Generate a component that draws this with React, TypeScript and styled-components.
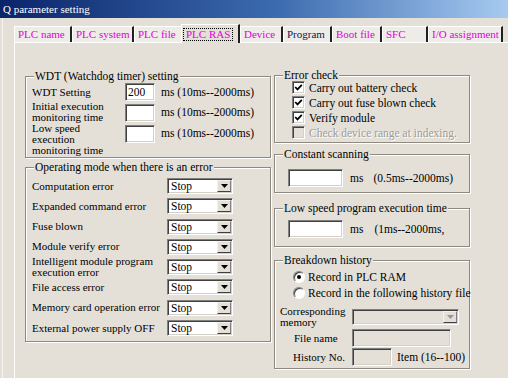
import React from "react";
import styled, { createGlobalStyle } from "styled-components";

const GlobalStyle = createGlobalStyle`
  html, body {
    margin: 0;
    padding: 0;
  }
  body {
    background: #e4e0d8;
    font-family: "Liberation Serif", "Times New Roman", serif;
    font-size: 11.5px;
    color: #000;
  }
`;

const Window = styled.div`
  width: 508px;
  height: 378px;
  overflow: hidden;
  background: #e4e0d8;
  display: flex;
  flex-direction: column;
`;

const TitleBar = styled.div`
  height: 18px;
  flex: none;
  background: linear-gradient(to right, #0a246a, #3d6cb0 55%, #a6caf0);
  color: #fff;
  font-size: 11px;
  line-height: 18px;
  padding-left: 3px;
`;

const Body = styled.div`
  flex: 1;
  display: flex;
  flex-direction: column;
  margin-left: 2px;
  border-left: 1px solid #f6f4f0;
  padding: 8px 0 0 11px;
`;

const TabRow = styled.div`
  display: flex;
  align-items: flex-end;
  height: 16px;
`;

const Tab = styled.div<{ $w: number; $color: string; $active?: boolean; $noRight?: boolean }>`
  box-sizing: border-box;
  width: ${(p) => p.$w}px;
  height: ${(p) => (p.$active ? 19 : 16)}px;
  margin-bottom: ${(p) => (p.$active ? -1 : 0)}px;
  position: relative;
  z-index: ${(p) => (p.$active ? 1 : 0)};
  flex: none;
  background: ${(p) => (p.$active ? "#e4e0d8" : "#eeece6")};
  border-top: 1px solid #fff;
  border-left: 1px solid #fff;
  border-right: ${(p) => (p.$noRight ? "none" : "2px solid #202020")};
  padding: ${(p) => (p.$active ? "3px 0 0 1px" : "1px 0 0 3px")};
  color: ${(p) => p.$color};
  font-size: 11px;
  line-height: 13px;
  white-space: nowrap;
`;

const FocusLabel = styled.span`
  display: inline-block;
  border: 1px dotted #000;
  padding: 0 2px;
  line-height: 11px;
`;

const Panel = styled.div`
  flex: 1;
  display: flex;
  gap: 3px;
  border-top: 1px solid #fff;
  border-left: 1px solid #fff;
  padding: 27px 0 0 10px;
`;

const Column = styled.div<{ $w: number; $mt?: number }>`
  width: ${(p) => p.$w}px;
  margin-top: ${(p) => p.$mt ?? 0}px;
  display: flex;
  flex-direction: column;
`;

const Group = styled.fieldset<{ $mt?: number; $pb?: number }>`
  margin: ${(p) => p.$mt ?? 0}px 0 0 0;
  padding: 0 6px ${(p) => p.$pb ?? 0}px 6px;
  border: 1px solid #8e8a82;
  box-shadow: 1px 1px 0 #fff, inset 1px 1px 0 #fff;
  min-width: 0;
`;

const Legend = styled.legend`
  padding: 0 1px;
  margin-left: 2px;
  line-height: 12px;
  background: #e4e0d8;
  position: relative;
`;

const WdtRow = styled.div<{ $top?: boolean; $mt?: number }>`
  display: flex;
  align-items: ${(p) => (p.$top ? "flex-start" : "center")};
  margin-top: ${(p) => p.$mt ?? 0}px;
`;

const FieldLabel = styled.div<{ $w: number; $pl?: number; $ml?: number }>`
  width: ${(p) => p.$w}px;
  box-sizing: border-box;
  flex: none;
  padding-left: ${(p) => p.$pl ?? 0}px;
  margin-left: ${(p) => p.$ml ?? 0}px;
  font-size: 11px;
  line-height: 11px;
  white-space: nowrap;
`;

const Field = styled.div<{ $w: number; $h?: number; $disabled?: boolean; $mt?: number }>`
  box-sizing: border-box;
  width: ${(p) => p.$w}px;
  height: ${(p) => p.$h ?? 18}px;
  margin-top: ${(p) => p.$mt ?? 0}px;
  flex: none;
  background: ${(p) => (p.$disabled ? "#e4e0d8" : "#fff")};
  border: 1px solid;
  border-color: #808080 #fff #fff #808080;
  box-shadow: inset 1px 1px 0 #404040, inset -1px -1px 0 #d4d0c8;
  padding: 1px 2px;
  line-height: 15px;
`;

const Hint = styled.span<{ $ml: number; $mt?: number }>`
  margin-left: ${(p) => p.$ml}px;
  margin-top: ${(p) => p.$mt ?? 0}px;
  white-space: nowrap;
`;

const OpRow = styled.div<{ $first?: boolean }>`
  display: flex;
  align-items: center;
  height: 16px;
  margin-top: ${(p) => (p.$first ? 5 : 4.3)}px;
`;

const Combo = styled.div<{ $w: number; $disabled?: boolean }>`
  box-sizing: border-box;
  width: ${(p) => p.$w}px;
  height: 16px;
  flex: none;
  display: flex;
  background: ${(p) => (p.$disabled ? "#e4e0d8" : "#fff")};
  border: 1px solid;
  border-color: #808080 #fff #fff #808080;
  box-shadow: inset 1px 1px 0 #404040, inset -1px -1px 0 #d4d0c8;
  padding: 1px;
`;

const ComboText = styled.span`
  flex: 1;
  padding-left: 2px;
  line-height: 13px;
`;

const ComboButton = styled.span`
  box-sizing: border-box;
  width: 14px;
  background: #e4e0d8;
  border: 1px solid;
  border-color: #f4f2ee #808080 #404040 #f4f2ee;
  display: flex;
  align-items: center;
  justify-content: center;
`;

const CheckRow = styled.div<{ $first?: boolean }>`
  display: flex;
  align-items: center;
  height: 15px;
  padding-left: 11px;
  margin-top: ${(p) => (p.$first ? -1 : 0)}px;
`;

const CheckBox = styled.span<{ $disabled?: boolean }>`
  box-sizing: border-box;
  width: 13px;
  height: 13px;
  flex: none;
  background: ${(p) => (p.$disabled ? "#e4e0d8" : "#fff")};
  border: 1px solid;
  border-color: #808080 #fff #fff #808080;
  box-shadow: inset 1px 1px 0 #404040, inset -1px -1px 0 #d4d0c8;
  display: flex;
  align-items: center;
  justify-content: center;
  margin-right: 4px;
`;

const OptionText = styled.span<{ $disabled?: boolean }>`
  white-space: nowrap;
  color: ${(p) => (p.$disabled ? "#a09c94" : "#000")};
  text-shadow: ${(p) => (p.$disabled ? "1px 1px 0 #fff" : "none")};
`;

const InlineRow = styled.div<{ $mt: number }>`
  display: flex;
  align-items: center;
  margin-top: ${(p) => p.$mt}px;
  padding-left: 7px;
`;

const RadioRow = styled.div<{ $mt?: number }>`
  display: flex;
  align-items: center;
  height: 16px;
  padding-left: 12px;
  margin-top: ${(p) => p.$mt ?? 0}px;
`;

const Radio = styled.span`
  box-sizing: border-box;
  width: 12px;
  height: 12px;
  flex: none;
  border-radius: 50%;
  background: #fff;
  border: 1px solid;
  border-color: #808080 #fff #fff #808080;
  box-shadow: inset 1px 1px 0 #404040;
  display: flex;
  align-items: center;
  justify-content: center;
  margin-right: 3px;
`;

const RadioDot = styled.span`
  width: 4px;
  height: 4px;
  border-radius: 50%;
  background: #000;
`;

const HistoryRow = styled.div<{ $mt: number }>`
  display: flex;
  align-items: center;
  margin-top: ${(p) => p.$mt}px;
`;

const Arrow = ({ color = "#000" }: { color?: string }) => (
  <svg width="7" height="4" viewBox="0 0 7 4">
    <polygon points="0,0 7,0 3.5,4" fill={color} />
  </svg>
);

const Check = () => (
  <svg width="9" height="9" viewBox="0 0 9 9">
    <polyline points="1.2,4 3.5,6.4 7.8,1.8" fill="none" stroke="#000" strokeWidth="1.8" />
  </svg>
);

const tabs = [
  { label: "PLC name", w: 58, color: "#e000e0" },
  { label: "PLC system", w: 62, color: "#e000e0" },
  { label: "PLC file", w: 47, color: "#e000e0", noRight: true },
  { label: "PLC RAS", w: 59, color: "#e000e0", active: true },
  { label: "Device", w: 43, color: "#e000e0" },
  { label: "Program", w: 49, color: "#14145a" },
  { label: "Boot file", w: 50, color: "#e000e0" },
  { label: "SFC", w: 46, color: "#e000e0" },
  { label: "I/O assignment", w: 75, color: "#e000e0" },
];

const errorModes = [
  "Computation error",
  "Expanded command error",
  "Fuse blown",
  "Module verify error",
  "Intelligent module program\nexecution error",
  "File access error",
  "Memory card operation error",
  "External power supply OFF",
];

const checks = [
  { label: "Carry out battery check", on: true },
  { label: "Carry out fuse blown check", on: true },
  { label: "Verify module", on: true },
  { label: "Check device range at indexing.", on: false, disabled: true },
];

const lines = (text: string) =>
  text.split("\n").map((t, i) => <div key={i}>{t}</div>);

export default function App() {
  return (
    <>
      <GlobalStyle />
      <Window>
        <TitleBar>Q parameter setting</TitleBar>
        <Body>
          <TabRow>
            {tabs.map((t) => (
              <Tab
                key={t.label}
                $w={t.w}
                $color={t.color}
                $active={t.active}
                $noRight={t.noRight}
              >
                {t.active ? <FocusLabel>{t.label}</FocusLabel> : t.label}
              </Tab>
            ))}
          </TabRow>
          <Panel>
            <Column $w={246}>
              <Group $pb={1}>
                <Legend>WDT (Watchdog timer) setting</Legend>
                <WdtRow $mt={1}>
                  <FieldLabel $w={93}>WDT Setting</FieldLabel>
                  <Field $w={30}>200</Field>
                  <Hint $ml={6}>ms (10ms--2000ms)</Hint>
                </WdtRow>
                <WdtRow $top>
                  <FieldLabel $w={93}>{lines("Initial execution\nmonitoring time")}</FieldLabel>
                  <Field $w={30} $mt={3} />
                  <Hint $ml={6} $mt={5}>ms (10ms--2000ms)</Hint>
                </WdtRow>
                <WdtRow $top>
                  <FieldLabel $w={93}>{lines("Low speed\nexecution\nmonitoring time")}</FieldLabel>
                  <Field $w={30} $mt={2} />
                  <Hint $ml={6} $mt={4}>ms (10ms--2000ms)</Hint>
                </WdtRow>
              </Group>
              <Group $mt={3} $pb={5}>
                <Legend>Operating mode when there is an error</Legend>
                {errorModes.map((m, i) => (
                  <OpRow key={m} $first={i === 0}>
                    <FieldLabel $w={135}>{lines(m)}</FieldLabel>
                    <Combo $w={66}>
                      <ComboText>Stop</ComboText>
                      <ComboButton>
                        <Arrow />
                      </ComboButton>
                    </Combo>
                  </OpRow>
                ))}
              </Group>
            </Column>
            <Column $w={196} $mt={-1}>
              <Group $pb={2}>
                <Legend>Error check</Legend>
                {checks.map((c, i) => (
                  <CheckRow key={c.label} $first={i === 0}>
                    <CheckBox $disabled={c.disabled}>{c.on && <Check />}</CheckBox>
                    <OptionText $disabled={c.disabled}>{c.label}</OptionText>
                  </CheckRow>
                ))}
              </Group>
              <Group $mt={5} $pb={5}>
                <Legend>Constant scanning</Legend>
                <InlineRow $mt={9}>
                  <Field $w={55} />
                  <Hint $ml={7}>ms</Hint>
                  <Hint $ml={10}>(0.5ms--2000ms)</Hint>
                </InlineRow>
              </Group>
              <Group $mt={9} $pb={8}>
                <Legend>Low speed program execution time</Legend>
                <InlineRow $mt={6}>
                  <Field $w={55} />
                  <Hint $ml={7}>ms</Hint>
                  <Hint $ml={11}>(1ms--2000ms,</Hint>
                </InlineRow>
              </Group>
              <Group $mt={7} $pb={2}>
                <Legend>Breakdown history</Legend>
                <RadioRow $mt={3}>
                  <Radio>
                    <RadioDot />
                  </Radio>
                  <OptionText>Record in PLC RAM</OptionText>
                </RadioRow>
                <RadioRow>
                  <Radio />
                  <OptionText>Record in the following history file</OptionText>
                </RadioRow>
                <HistoryRow $mt={5}>
                  <FieldLabel $w={72} $ml={-1}>{lines("Corresponding\nmemory")}</FieldLabel>
                  <Combo $w={107} $disabled>
                    <ComboText />
                    <ComboButton>
                      <Arrow color="#9a968e" />
                    </ComboButton>
                  </Combo>
                </HistoryRow>
                <HistoryRow $mt={1}>
                  <FieldLabel $w={71} $pl={13}>File name</FieldLabel>
                  <Field $w={99} $disabled />
                </HistoryRow>
                <HistoryRow $mt={1}>
                  <FieldLabel $w={71} $pl={12}>History No.</FieldLabel>
                  <Field $w={40} $disabled />
                  <Hint $ml={5}>Item (16--100)</Hint>
                </HistoryRow>
              </Group>
            </Column>
          </Panel>
        </Body>
      </Window>
    </>
  );
}
